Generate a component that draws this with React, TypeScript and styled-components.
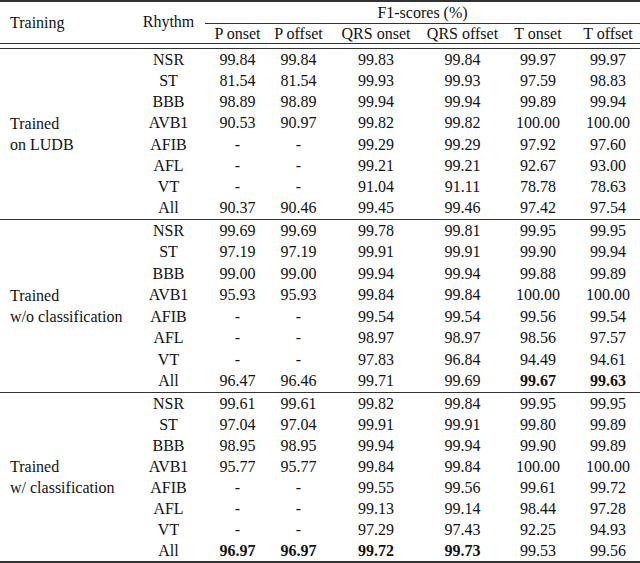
import styled, { createGlobalStyle } from "styled-components";

type Row = { rhythm: string; values: string[]; bold?: number[] };
type Group = { label: string[]; rowH: number; rows: Row[] };

const COLS = "132px 73px 65px 57px 98px 75px 76px 64px";

const groups: Group[] = [
  {
    label: ["Trained", "on LUDB"],
    rowH: 21.25,
    rows: [
      { rhythm: "NSR", values: ["99.84", "99.84", "99.83", "99.84", "99.97", "99.97"] },
      { rhythm: "ST", values: ["81.54", "81.54", "99.93", "99.93", "97.59", "98.83"] },
      { rhythm: "BBB", values: ["98.89", "98.89", "99.94", "99.94", "99.89", "99.94"] },
      { rhythm: "AVB1", values: ["90.53", "90.97", "99.82", "99.82", "100.00", "100.00"] },
      { rhythm: "AFIB", values: ["-", "-", "99.29", "99.29", "97.92", "97.60"] },
      { rhythm: "AFL", values: ["-", "-", "99.21", "99.21", "92.67", "93.00"] },
      { rhythm: "VT", values: ["-", "-", "91.04", "91.11", "78.78", "78.63"] },
      { rhythm: "All", values: ["90.37", "90.46", "99.45", "99.46", "97.42", "97.54"] },
    ],
  },
  {
    label: ["Trained", "w/o classification"],
    rowH: 21.5,
    rows: [
      { rhythm: "NSR", values: ["99.69", "99.69", "99.78", "99.81", "99.95", "99.95"] },
      { rhythm: "ST", values: ["97.19", "97.19", "99.91", "99.91", "99.90", "99.94"] },
      { rhythm: "BBB", values: ["99.00", "99.00", "99.94", "99.94", "99.88", "99.89"] },
      { rhythm: "AVB1", values: ["95.93", "95.93", "99.84", "99.84", "100.00", "100.00"] },
      { rhythm: "AFIB", values: ["-", "-", "99.54", "99.54", "99.56", "99.54"] },
      { rhythm: "AFL", values: ["-", "-", "98.97", "98.97", "98.56", "97.57"] },
      { rhythm: "VT", values: ["-", "-", "97.83", "96.84", "94.49", "94.61"] },
      { rhythm: "All", values: ["96.47", "96.46", "99.71", "99.69", "99.67", "99.63"], bold: [4, 5] },
    ],
  },
  {
    label: ["Trained", "w/ classification"],
    rowH: 21,
    rows: [
      { rhythm: "NSR", values: ["99.61", "99.61", "99.82", "99.84", "99.95", "99.95"] },
      { rhythm: "ST", values: ["97.04", "97.04", "99.91", "99.91", "99.80", "99.89"] },
      { rhythm: "BBB", values: ["98.95", "98.95", "99.94", "99.94", "99.90", "99.89"] },
      { rhythm: "AVB1", values: ["95.77", "95.77", "99.84", "99.84", "100.00", "100.00"] },
      { rhythm: "AFIB", values: ["-", "-", "99.55", "99.56", "99.61", "99.72"] },
      { rhythm: "AFL", values: ["-", "-", "99.13", "99.14", "98.44", "97.28"] },
      { rhythm: "VT", values: ["-", "-", "97.29", "97.43", "92.25", "94.93"] },
      { rhythm: "All", values: ["96.97", "96.97", "99.72", "99.73", "99.53", "99.56"], bold: [0, 1, 2, 3] },
    ],
  },
];

const subHeads = ["P onset", "P offset", "QRS onset", "QRS offset", "T onset", "T offset"];

function App() {
  return (
    <Table>
      <GlobalStyles />
      <Rule $thick />
      <Header>
        <HeadLabel>Training</HeadLabel>
        <HeadRhythm>Rhythm</HeadRhythm>
        <Spanner>F1-scores (%)</Spanner>
        <CMidRule />
        {subHeads.map((h) => (
          <SubHead key={h}>{h}</SubHead>
        ))}
      </Header>
      <DoubleRule />
      {groups.map((g, gi) => (
        <div key={gi}>
          {gi > 0 && <Rule />}
          <Body $rowH={g.rowH}>
            <GroupLabel $rowH={g.rowH}>
              {g.label.map((l) => (
                <span key={l}>{l}</span>
              ))}
            </GroupLabel>
            {g.rows.map((r) => [
              <Cell key={r.rhythm}>{r.rhythm}</Cell>,
              ...r.values.map((v, i) => (
                <Cell key={r.rhythm + i} $bold={r.bold?.includes(i)}>
                  {v}
                </Cell>
              )),
            ])}
          </Body>
        </div>
      ))}
      <Rule $thick />
    </Table>
  );
}

export default App;

const GlobalStyles = createGlobalStyle`
  * {
    margin: 0;
    padding: 0;
    box-sizing: border-box;
  }
  body {
    background: #fff;
    color: #111;
    font-family: "Liberation Serif", "Times New Roman", serif;
    font-size: 16px;
  }
`;

const Table = styled.div`
  width: 640px;
  display: flex;
  flex-direction: column;
`;

const Rule = styled.div<{ $thick?: boolean }>`
  height: ${(p) => (p.$thick ? 2 : 1)}px;
  background: #333;
`;

const DoubleRule = styled.div`
  height: 6px;
  border-top: 1px solid #333;
  border-bottom: 1px solid #333;
`;

const Header = styled.div`
  display: grid;
  grid-template-columns: ${COLS};
  grid-template-rows: 21px 1px 19px;
`;

const HeadLabel = styled.div`
  grid-column: 1;
  grid-row: 1 / 4;
  display: flex;
  align-items: center;
  padding-left: 10px;
`;

const HeadRhythm = styled.div`
  grid-column: 2;
  grid-row: 1 / 4;
  display: flex;
  align-items: center;
  justify-content: center;
  padding-bottom: 2px;
`;

const Spanner = styled.div`
  grid-column: 3 / -1;
  grid-row: 1;
  display: flex;
  align-items: center;
  justify-content: center;
`;

const CMidRule = styled.div`
  grid-column: 3 / -1;
  grid-row: 2;
  background: #333;
`;

const SubHead = styled.div`
  grid-row: 3;
  display: flex;
  align-items: center;
  justify-content: center;
  white-space: nowrap;
`;

const Body = styled.div<{ $rowH: number }>`
  display: grid;
  grid-template-columns: ${COLS};
  grid-template-rows: repeat(8, ${(p) => p.$rowH}px);
`;

const GroupLabel = styled.div<{ $rowH: number }>`
  grid-column: 1;
  grid-row: 1 / span 8;
  display: flex;
  flex-direction: column;
  justify-content: center;
  padding-left: 10px;
  line-height: ${(p) => p.$rowH}px;
  white-space: nowrap;
`;

const Cell = styled.div<{ $bold?: boolean }>`
  display: flex;
  align-items: center;
  justify-content: center;
  font-weight: ${(p) => (p.$bold ? 700 : 400)};
  white-space: nowrap;
`;
